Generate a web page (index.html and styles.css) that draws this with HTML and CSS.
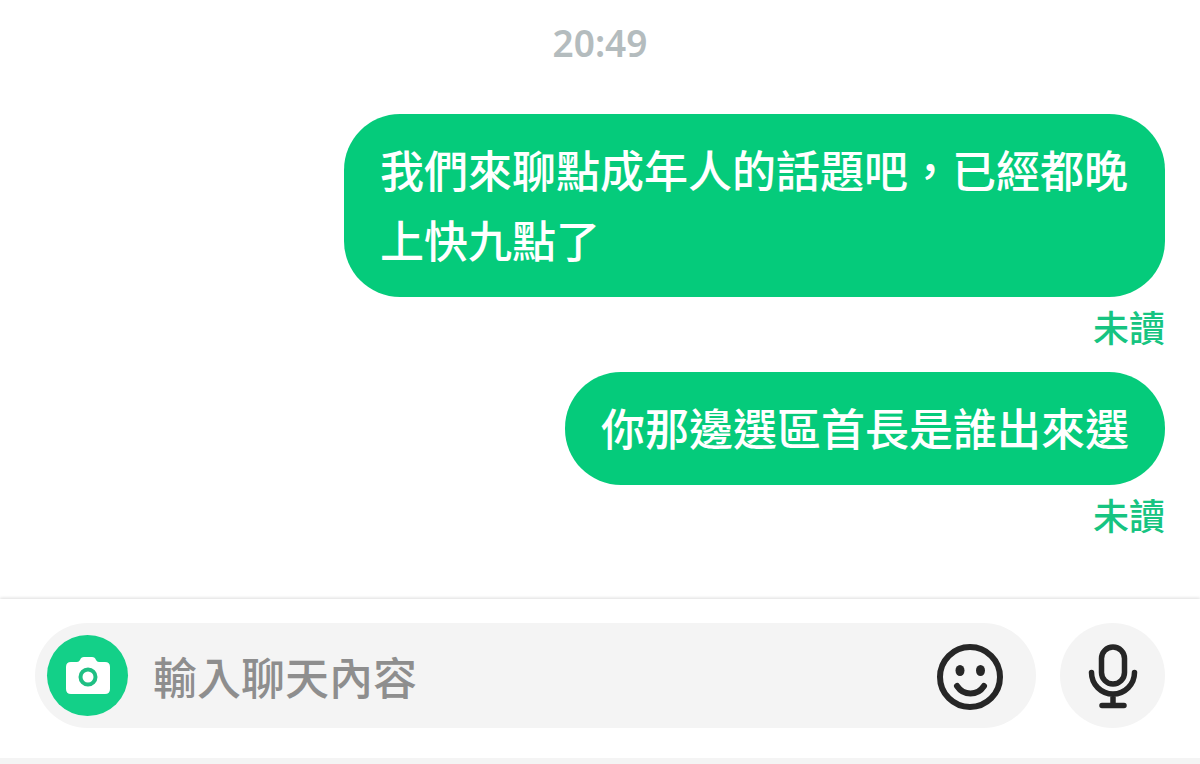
FILE: index.html
```html
<!DOCTYPE html>
<html lang="zh-Hant">
<head>
<meta charset="utf-8">
<title>聊天</title>
<link rel="stylesheet" href="styles.css">
</head>
<body>
<main class="chat">
  <time class="time">20:49</time>
  <section class="message">
    <p class="bubble">我們來聊點成年人的話題吧，已經都晚上快九點了</p>
    <span class="status">未讀</span>
  </section>
  <section class="message">
    <p class="bubble">你那邊選區首長是誰出來選</p>
    <span class="status">未讀</span>
  </section>
</main>
<form class="composer">
  <div class="field">
    <button class="camera" type="button" aria-label="相機">
      <svg width="46" height="40" viewBox="0 0 46 40"><path fill="#fff" d="M6 6h6q2 0 3-2 1-3 4-3h8q3 0 4 3 1 2 3 2h6q5 0 5 5v22q0 5-5 5H6q-5 0-5-5V11q0-5 5-5z"/><circle cx="23" cy="21" r="7.500" fill="none" stroke="#1fbf83" stroke-width="4"/></svg>
    </button>
    <input class="input" type="text" aria-label="輸入聊天內容" placeholder="輸入聊天內容">
    <button class="emoji" type="button" aria-label="表情">
      <svg width="68" height="70" viewBox="0 0 68 70" fill="none" stroke="#262626" stroke-width="6" stroke-linecap="round"><circle cx="34" cy="36" r="30"/><path d="M21 45q5 7.500 13.500 7.500T48 45"/><ellipse cx="24" cy="29.500" rx="4.500" ry="5.500" fill="#262626" stroke="none"/><ellipse cx="44.500" cy="29.500" rx="4.500" ry="5.500" fill="#262626" stroke="none"/></svg>
    </button>
  </div>
  <button class="mic" type="button" aria-label="語音">
    <svg width="50" height="66" viewBox="0 0 50 66" fill="none" stroke="#262626" stroke-width="5.500" stroke-linecap="round"><rect x="13.500" y="4" width="23" height="37" rx="11.500"/><path d="M3.500 29.500a21.500 21.500 0 0 0 43 0M25 51v11M14 62.500h22"/></svg>
  </button>
</form>
</body>
</html>
```
FILE: styles.css
```css
* { box-sizing: border-box; }
body { margin: 0; min-height: 100vh; display: flex; flex-direction: column; background: #fff; font-family: "Noto Sans", "Noto Sans CJK TC", sans-serif; }
.chat { flex: 1; display: flex; flex-direction: column; padding: 18px 35px 0; }
.time { align-self: center; margin-bottom: 46px; font-size: 37px; font-weight: 600; line-height: 50px; color: #b4bcbe; }
.message { display: flex; flex-direction: column; align-items: flex-end; margin-bottom: 18px; }
.bubble { margin: 0; max-width: 821px; padding: 22px 36px 21px; border-radius: 56px; background: #05cb7b; color: #fff; font-size: 44px; font-weight: 500; line-height: 70px; }
.status { padding-top: 6px; font-size: 36px; font-weight: 500; line-height: 51px; color: #16c481; }
.composer { display: flex; gap: 24px; padding: 24px 35px 30px; border-bottom: 6px solid #f4f4f4; box-shadow: 0 -1px 3px #ddd; }
.field { flex: 1; min-width: 0; display: flex; align-items: center; height: 105px; padding: 0 32px 0 12px; border-radius: 53px; background: #f4f4f4; }
button { display: flex; align-items: center; justify-content: center; padding: 0; border: 0; background: none; }
.camera { width: 81px; height: 81px; border-radius: 50%; background: #13d088; }
.input { flex: 1; min-width: 0; margin-left: 25px; padding: 0; border: 0; outline: 0; background: none; font: 500 44px/64px "Noto Sans CJK TC", sans-serif; }
.input::placeholder { color: #8e8e8e; opacity: 1; }
.mic { width: 105px; height: 105px; border-radius: 50%; background: #f4f4f4; }
```
